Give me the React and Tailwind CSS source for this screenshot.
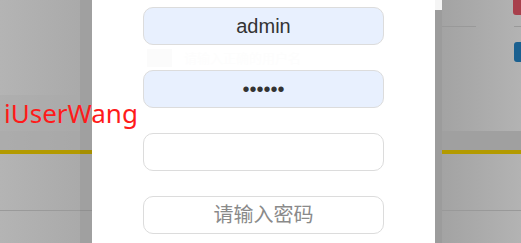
import React from 'react';

const Field = ({ type = 'text', value, placeholder, filled }) => (
  <input
    type={type}
    defaultValue={value}
    placeholder={placeholder}
    readOnly
    className={`block w-[241px] h-[38px] rounded-[10px] border border-[#dcdcdc] text-center text-[20px] text-[#333] placeholder:text-[#8a8a8a] outline-none ${filled ? 'bg-[#e8f0fe]' : 'bg-white'}`}
    style={{ fontFamily: '"Liberation Sans", "Noto Sans CJK SC", sans-serif' }}
  />
);

const SidePanel = ({ children }) => (
  <div className="flex flex-col h-[243px]">
    {children}
  </div>
);

export default function App() {
  return (
    <div className="relative w-[521px] h-[243px] overflow-hidden flex bg-[#b0b0b0]">
      {/* left backdrop */}
      <div className="w-[92px] shrink-0 flex">
        <div className="w-[80px] bg-gradient-to-r from-[#b4b4b4] to-[#aaaaaa]">
          <SidePanel>
            <div className="h-[95px]" />
            <div className="h-[36px] bg-[#a9a9a9]/50" />
            <div className="h-[19px] bg-[#a7a7a7]/60" />
            <div className="h-[4px] bg-[#b39a00]" />
            <div className="h-[56px]" />
            <div className="h-px bg-[#9a9a9a]" />
          </SidePanel>
        </div>
        <div className="w-[12px] bg-[#a0a0a0]">
          <SidePanel>
            <div className="h-[150px]" />
            <div className="h-[4px] bg-[#a58e00]" />
            <div className="h-[56px]" />
            <div className="h-px bg-[#909090]" />
          </SidePanel>
        </div>
      </div>

      {/* modal */}
      <div className="w-[343px] shrink-0 bg-white flex flex-col items-center pt-[7px]">
        <Field value="admin" filled />
        <div className="h-[25px] w-[241px] flex items-center gap-[12px] px-[4px]">
          <div className="w-[25px] h-[18px] bg-[#fbfbfb]" />
          <span className="text-[13px] text-[#fdfdfd]" style={{ fontFamily: '"Noto Sans CJK SC", sans-serif' }}>
            请输入正确的用户名
          </span>
        </div>
        <Field type="password" value="123456" filled />
        <div className="h-[25px]" />
        <Field />
        <div className="h-[25px]" />
        <Field placeholder="请输入密码" />
      </div>

      {/* right backdrop */}
      <div className="flex-1 flex">
        <div className="w-[7px] flex flex-col bg-[#9c9c9c]">
          <div className="h-[10px] bg-[#f5f5f5]" />
        </div>
        <div className="flex-1 bg-gradient-to-r from-[#a3a3a3] to-[#b3b3b3] flex flex-col">
          <div className="h-[26px] flex justify-between">
            <div />
            <div className="w-[10px] h-[15px] rounded-bl-[3px] bg-[#a8404c] mr-[-2px]" />
          </div>
          <div className="h-px flex justify-between">
            <div className="w-[34px] bg-[#999]" />
            <div className="w-[7px] bg-[#999]" />
          </div>
          <div className="h-[15px]" />
          <div className="h-[20px] flex justify-end">
            <div className="w-[9px] rounded-l-[3px] bg-[#1a6090] mr-[-2px]" />
          </div>
          <div className="h-[69px]" />
          <div className="h-[19px] bg-[#a0a0a0]" />
          <div className="h-[4px] bg-[#b39a00]" />
          <div className="h-[56px]" />
          <div className="h-px bg-[#999]" />
        </div>
      </div>

      {/* watermark label */}
      <span
        className="absolute left-[4px] top-[96px] text-[26px] leading-[34px] text-[#ff1a1a]"
        style={{ fontFamily: '"Noto Sans", sans-serif' }}
      >
        iUserWang
      </span>
    </div>
  );
}
